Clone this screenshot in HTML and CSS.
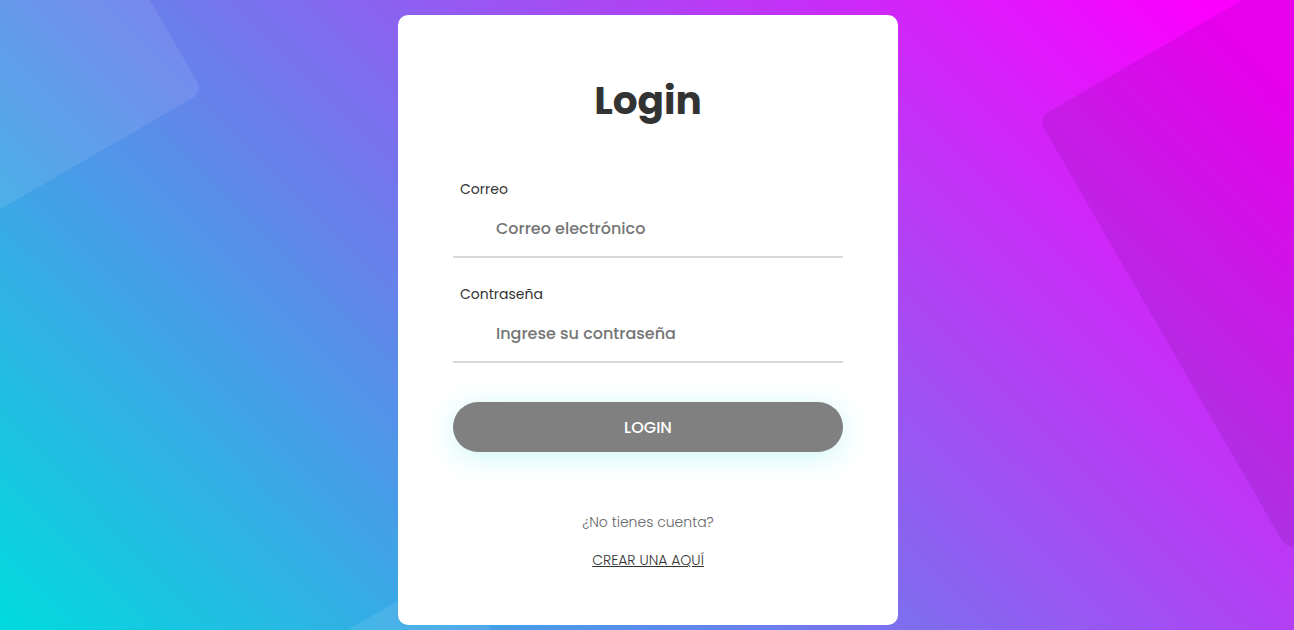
FILE: index.html
```html
<!DOCTYPE html>
<html lang="es">
<head>
<meta charset="utf-8">
<title>Login</title>
<link rel="stylesheet" href="styles.css">
</head>
<body>
<div class="page">
  <div class="shape shape-tl"></div>
  <div class="shape shape-bl"></div>
  <div class="shape shape-r"></div>
  <form class="card">
    <h1 class="title">Login</h1>
    <div class="field">
      <label class="label" for="email">Correo</label>
      <input class="input" id="email" type="text" placeholder="Correo electrónico">
    </div>
    <div class="field field-last">
      <label class="label" for="pass">Contraseña</label>
      <input class="input" id="pass" type="password" placeholder="Ingrese su contraseña">
    </div>
    <button class="btn" type="button">Login</button>
    <p class="note">¿No tienes cuenta?</p>
    <a class="link" href="#">CREAR UNA AQUÍ</a>
  </form>
</div>
</body>
</html>
```
FILE: styles.css
```css
* { box-sizing: border-box; }
html, body { margin: 0; padding: 0; }
body {
  font-family: Poppins, "Open Sans", sans-serif;
  color: #333;
}
.page {
  position: relative;
  overflow: hidden;
  height: 100vh;
  display: flex;
  align-items: flex-start;
  justify-content: center;
  padding: 15px 0 0 2px;
  background: linear-gradient(45deg, #00dbde 0%, #fc00ff 95%);
}
.shape {
  position: absolute;
  border-radius: 12px;
}
.shape-tl {
  width: 400px;
  height: 400px;
  left: -197px;
  top: -308px;
  transform-origin: 100% 100%;
  transform: rotate(-30deg);
  background: rgba(255, 255, 255, 0.09);
}
.shape-bl {
  width: 250px;
  height: 250px;
  left: 205px;
  top: 568px;
  transform-origin: 100% 0;
  transform: rotate(-30deg);
  background: rgba(255, 255, 255, 0.09);
}
.shape-r {
  width: 800px;
  height: 500px;
  left: 1038px;
  top: 118px;
  transform-origin: 0 0;
  transform: rotate(-30deg);
  background: rgba(40, 0, 60, 0.1);
}
.card {
  position: relative;
  z-index: 1;
  width: 500px;
  background: #fff;
  border-radius: 10px;
  padding: 62px 55px 54px;
  display: flex;
  flex-direction: column;
}
.title {
  margin: 0 0 54px;
  font-size: 39px;
  line-height: 48px;
  font-weight: 700;
  color: #333;
  text-align: center;
}
.field {
  display: flex;
  flex-direction: column;
  border-bottom: 2px solid #d9d9d9;
  margin-bottom: 26px;
}
.field-last { margin-bottom: 39px; }
.label {
  font-size: 14px;
  line-height: 21px;
  color: #333;
  padding-left: 7px;
}
.input {
  height: 56px;
  border: 0;
  outline: none;
  background: transparent;
  padding: 0 7px 0 43px;
  font-family: inherit;
  font-size: 16px;
  font-weight: 500;
  color: #333;
}
.input::placeholder {
  color: #757575;
  opacity: 1;
}
.btn {
  height: 50px;
  border: 0;
  border-radius: 25px;
  background: #808080;
  color: #fff;
  font-family: inherit;
  font-size: 16px;
  font-weight: 500;
  text-transform: uppercase;
  box-shadow: 0 5px 30px rgba(3, 216, 222, 0.2);
  margin-bottom: 60px;
}
.note {
  margin: 0 0 17px;
  font-size: 14px;
  line-height: 21px;
  font-weight: 300;
  color: #666;
  text-align: center;
}
.link {
  align-self: center;
  font-size: 14px;
  line-height: 21px;
  font-weight: 300;
  color: #333;
  text-decoration: underline;
}
```
